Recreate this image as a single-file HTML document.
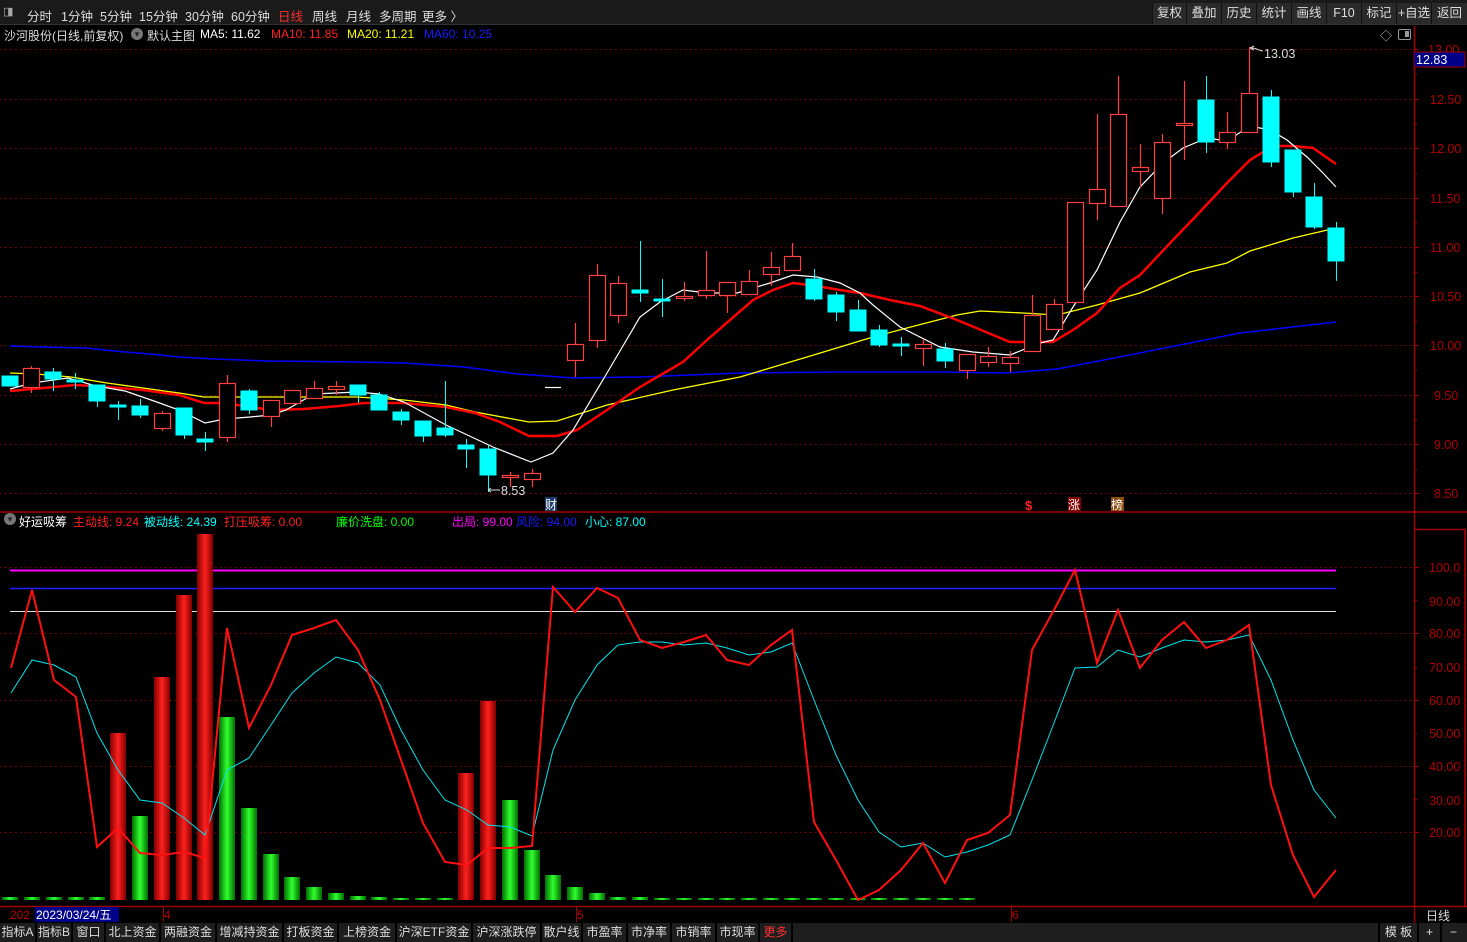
<!DOCTYPE html>
<html><head><meta charset="utf-8"><style>
*{margin:0;padding:0;box-sizing:border-box}
body{width:1467px;height:942px;background:#000;overflow:hidden;position:relative;font-family:"Liberation Sans","Noto Sans CJK SC",sans-serif;font-size:12px;color:#ddd}
.t{position:absolute;white-space:nowrap}
#top{position:absolute;left:0;top:0;width:1467px;height:25px;background:#1a1a1a;border-bottom:1px solid #333}
.tb{position:absolute;top:3px;height:21px;background:#2a2a2a;color:#ddd;font-size:12.5px;line-height:21px;text-align:center;border-left:1px solid #111}
#bot{position:absolute;left:0;top:923px;width:1467px;height:19px;background:#1e1e1e;display:flex}
#bot div{height:19px;line-height:19px;font-size:12px;color:#ddd;text-align:center;border-right:2px solid #000;white-space:nowrap}
</style></head><body>
<div id="top">
<div class="t" style="left:3px;top:5px;width:14px;height:13px;color:#aaa;font-size:11px">◨</div>
<div class="t" style="left:27px;top:6px;font-size:12.5px">分时</div>
<div class="t" style="left:61px;top:6px;font-size:12.5px">1分钟</div>
<div class="t" style="left:100px;top:6px;font-size:12.5px">5分钟</div>
<div class="t" style="left:139px;top:6px;font-size:12.5px">15分钟</div>
<div class="t" style="left:185px;top:6px;font-size:12.5px">30分钟</div>
<div class="t" style="left:231px;top:6px;font-size:12.5px">60分钟</div>
<div class="t" style="left:278px;top:6px;font-size:12.5px;color:#ff3030">日线</div>
<div class="t" style="left:312px;top:6px;font-size:12.5px">周线</div>
<div class="t" style="left:346px;top:6px;font-size:12.5px">月线</div>
<div class="t" style="left:379px;top:6px;font-size:12.5px">多周期</div>
<div class="t" style="left:422px;top:6px;font-size:12.5px">更多 〉</div>
<div class="tb" style="left:1152px;width:34px">复权</div>
<div class="tb" style="left:1186px;width:35px">叠加</div>
<div class="tb" style="left:1221px;width:35px">历史</div>
<div class="tb" style="left:1256px;width:35px">统计</div>
<div class="tb" style="left:1291px;width:35px">画线</div>
<div class="tb" style="left:1326px;width:35px">F10</div>
<div class="tb" style="left:1361px;width:35px">标记</div>
<div class="tb" style="left:1396px;width:35px">+自选</div>
<div class="tb" style="left:1431px;width:36px">返回</div>
</div>

<div class="t" style="left:4px;top:27px">沙河股份(日线,前复权)</div>
<div class="t" style="left:131px;top:28px;width:12px;height:12px;border-radius:6px;background:#777;color:#222;font-size:9px;line-height:12px;text-align:center">▾</div>
<div class="t" style="left:147px;top:27px">默认主图</div>
<div class="t" style="left:200px;top:27px;color:#fff">MA5: 11.62</div>
<div class="t" style="left:271px;top:27px;color:#ff2020">MA10: 11.85</div>
<div class="t" style="left:347px;top:27px;color:#ffff00">MA20: 11.21</div>
<div class="t" style="left:424px;top:27px;color:#1a1aff">MA60: 10.25</div>
<div class="t" style="left:1380px;top:27px;color:#bbb;font-size:12px">◇</div>
<div class="t" style="left:1398px;top:29px;width:13px;height:11px;border:1.5px solid #999;border-radius:2px"><div style="position:absolute;right:1px;top:1px;width:4px;height:6px;background:#999"></div></div>

<div class="t" style="left:4px;top:513px;width:12px;height:12px;border-radius:6px;background:#777;color:#222;font-size:9px;line-height:12px;text-align:center">▾</div>
<div class="t" style="left:19px;top:513px;color:#fff">好运吸筹</div>
<div class="t" style="left:73px;top:513px;color:#ff2020">主动线: 9.24</div>
<div class="t" style="left:144px;top:513px;color:#00ffff">被动线: 24.39</div>
<div class="t" style="left:224px;top:513px;color:#ff2020">打压吸筹: 0.00</div>
<div class="t" style="left:336px;top:513px;color:#00ff00">廉价洗盘: 0.00</div>
<div class="t" style="left:452px;top:513px;color:#ff00ff">出局: 99.00</div>
<div class="t" style="left:516px;top:513px;color:#1a1aff">风险: 94.00</div>
<div class="t" style="left:585px;top:513px;color:#00ffff">小心: 87.00</div>

<svg style="position:absolute;left:0;top:0" width="1467" height="942" xmlns="http://www.w3.org/2000/svg">
<g stroke="#8b0000" stroke-dasharray="1.5,3.5" stroke-width="1">
<path d="M0 49.5H1414M0 99.5H1414M0 148.5H1414M0 198.5H1414M0 247.5H1414M0 296.5H1414M0 345.5H1414M0 395.5H1414M0 444.5H1414M0 493.5H1414"/>
<path d="M0 567.5H1414M0 633.5H1414M0 700.5H1414M0 766.5H1414M0 832.5H1414"/>
</g>
<g stroke="#a00000" stroke-width="1.5" fill="none">
<path d="M0 512H1467M0 906.5H1467M1414.5 26V923"/>
<path d="M1415 529.5H1465V906"/>
<path d="M1465 529V906"/>
</g>
<g stroke="#a00000" stroke-width="1">
<path d="M1414 49.5h5M1414 74.5h3M1414 99.5h5M1414 124.5h3M1414 148.5h5M1414 173.5h3M1414 198.5h5M1414 222.5h3M1414 247.5h5M1414 272.5h3M1414 296.5h5M1414 321.5h3M1414 345.5h5M1414 370.5h3M1414 395.5h5M1414 420.5h3M1414 444.5h5M1414 469.5h3M1414 493.5h5"/>
<path d="M1414 567.5h5M1414 600.5h3M1414 633.5h5M1414 667.5h3M1414 700.5h5M1414 733.5h3M1414 766.5h5M1414 799.5h3M1414 832.5h5"/>
<path d="M163.5 907v15M576.5 907v15M1011.5 907v15"/>
</g>
<g fill="#b00000" font-size="12.5" font-family="Liberation Sans">
<text x="1428" y="54">13.00</text><text x="1430" y="104">12.50</text><text x="1430" y="153">12.00</text><text x="1430" y="203">11.50</text><text x="1430" y="252">11.00</text><text x="1430" y="301">10.50</text><text x="1430" y="350">10.00</text><text x="1434" y="400">9.50</text><text x="1434" y="449">9.00</text><text x="1434" y="498">8.50</text>
<text x="1429" y="572">100.0</text><text x="1429" y="606">90.00</text><text x="1429" y="638">80.00</text><text x="1429" y="672">70.00</text><text x="1429" y="705">60.00</text><text x="1429" y="738">50.00</text><text x="1429" y="771">40.00</text><text x="1429" y="805">30.00</text><text x="1429" y="837">20.00</text>
</g>
<rect x="1414" y="52" width="51" height="15" fill="#000088" stroke="#a00000" stroke-width="1"/>
<text x="1416" y="64" fill="#fff" font-size="12.5" font-family="Liberation Sans">12.83</text>

<!-- MA lines -->
<polyline fill="none" stroke="#0000ff" stroke-width="1.5" points="10,346 43,347 86,348 114,351 150,354 179,357 214,359 268,361 357,362 404,363 464,367 518,374 560,377 573,378 640,377 740,373 840,372 940,372 1007,373 1057,369 1140,353 1240,333 1336,322"/>
<polyline fill="none" stroke="#ffff00" stroke-width="1.3" points="10,373 36,374 71,377 107,383 143,388 179,393 204,397 268,397 357,397 404,400 446,405 475,412 529,422 557,421 607,405 673,390 740,377 807,357 873,337 907,328 957,315 980,311 1023,313 1057,315 1097,305 1140,293 1190,272 1227,263 1250,251 1293,238 1336,228"/>
<polyline fill="none" stroke="#ff0000" stroke-width="2.5" points="10,391 43,388 75,385 107,387 143,390 179,395 204,403 225,403 250,407 271,410 304,409 339,406 364,403 404,403 446,407 475,413 500,422 529,436 557,436 577,430 607,410 640,387 683,362 707,340 730,320 753,300 773,290 793,283 817,286 840,290 860,293 890,300 920,306 957,320 1010,342 1053,342 1073,330 1097,313 1120,288 1140,275 1173,240 1197,215 1227,183 1250,160 1273,146 1293,146 1313,148 1336,164"/>
<polyline fill="none" stroke="#ffffff" stroke-width="1.2" points="10,389 32,383 68,378 96,386 125,391 154,401 179,410 205,423 225,419 250,417 271,415 286,410 314,394 357,392 379,394 404,402 446,425 493,447 531,462 553,453 573,430 607,373 640,317 660,302 683,290 707,293 737,293 770,283 793,275 817,277 840,283 860,293 873,305 900,327 940,347 973,352 1010,355 1040,343 1053,340 1073,307 1097,270 1120,222 1140,187 1163,163 1183,148 1207,138 1227,141 1250,126 1270,130 1287,140 1307,157 1323,173 1336,187"/>

<!-- candles -->
<g stroke="#00ffff" fill="#00ffff" stroke-width="1">
<path d="M10.5 376V386M53.5 368V391M75.5 373V389M97.5 385V407M118.5 401V420M140.5 399V418M184.5 408V439M205.5 432V451M249.5 389V414M358.5 385V403M379.5 392V410M401.5 409V425M423.5 421V442M445.5 381V437M466.5 439V468M488.5 445V492M640.5 241V302M662.5 279V317M814.5 269V301M836.5 292V321M858.5 300V331M879.5 325V347M901.5 337V356M945.5 343V368M1206.5 76V153M1271.5 90V167M1293.5 150V197M1314.5 183V229M1336.5 222V281"/>
<rect x="2" y="376" width="16" height="10"/><rect x="45" y="372" width="16" height="7"/><rect x="67" y="380" width="16" height="2"/><rect x="89" y="385" width="16" height="16"/><rect x="110" y="405" width="16" height="2"/><rect x="132" y="406" width="16" height="9"/><rect x="176" y="408" width="16" height="27"/><rect x="197" y="439" width="16" height="3"/><rect x="241" y="391" width="16" height="19"/><rect x="350" y="385" width="16" height="10"/><rect x="371" y="395" width="16" height="15"/><rect x="393" y="412" width="16" height="8"/><rect x="415" y="421" width="16" height="15"/><rect x="437" y="428" width="16" height="7"/><rect x="458" y="445" width="16" height="4"/><rect x="480" y="449" width="16" height="26"/>
<rect x="632" y="290" width="16" height="3"/><rect x="654" y="299" width="16" height="2"/><rect x="806" y="279" width="16" height="20"/><rect x="828" y="295" width="16" height="17"/><rect x="850" y="310" width="16" height="21"/><rect x="871" y="330" width="16" height="15"/><rect x="893" y="344" width="16" height="2"/><rect x="937" y="349" width="16" height="12"/>
<rect x="1198" y="100" width="16" height="42"/><rect x="1263" y="97" width="16" height="65"/><rect x="1285" y="150" width="16" height="42"/><rect x="1306" y="197" width="16" height="30"/><rect x="1328" y="228" width="16" height="33"/>
</g>
<g stroke="#ff4040" fill="#000" stroke-width="1.2">
<path d="M31.5 366V393M162.5 411V431M227.5 375V442M271.5 400V427M292.5 390V403M314.5 381V398M336.5 381V395M510.5 472V487M532.5 469V487M575.5 323V377M597.5 264V348M618.5 276V323M684.5 282V301M706.5 251V299M727.5 282V313M749.5 270V294M771.5 252V286M792.5 243V270M923.5 339V366M967.5 354V379M988.5 347V367M1010.5 351V372M1032.5 295V351M1054.5 299V329M1075.5 202V302M1097.5 114V220M1118.5 76V206M1140.5 144V188M1162.5 134V214M1184.5 81V160M1227.5 112V149M1249.5 47V132"/>
<rect x="23.5" y="368.5" width="16" height="19"/><rect x="154.5" y="413.5" width="16" height="15"/><rect x="219.5" y="383.5" width="16" height="54"/><rect x="263.5" y="400.5" width="16" height="16"/><rect x="284.5" y="390.5" width="16" height="13"/><rect x="306.5" y="388.5" width="16" height="10"/><rect x="328.5" y="386.5" width="16" height="3"/><rect x="502.5" y="475.5" width="16" height="2"/><rect x="524.5" y="473.5" width="16" height="6"/>
<rect x="567.5" y="344.5" width="16" height="16"/><rect x="589.5" y="275.5" width="16" height="65"/><rect x="610.5" y="283.5" width="16" height="32"/><rect x="676.5" y="296.5" width="16" height="2"/><rect x="698.5" y="290.5" width="16" height="5"/><rect x="719.5" y="282.5" width="16" height="13"/><rect x="741.5" y="281.5" width="16" height="13"/><rect x="763.5" y="267.5" width="16" height="7"/><rect x="784.5" y="256.5" width="16" height="14"/>
<rect x="915.5" y="344.5" width="16" height="4"/><rect x="959.5" y="354.5" width="16" height="16"/><rect x="980.5" y="356.5" width="16" height="6"/><rect x="1002.5" y="357.5" width="16" height="6"/><rect x="1024.5" y="315.5" width="16" height="36"/><rect x="1046.5" y="304.5" width="16" height="25"/><rect x="1067.5" y="202.5" width="16" height="100"/><rect x="1089.5" y="189.5" width="16" height="14"/><rect x="1110.5" y="114.5" width="16" height="92"/><rect x="1132.5" y="167.5" width="16" height="4"/><rect x="1154.5" y="142.5" width="16" height="56"/><rect x="1176.5" y="123.5" width="16" height="2"/><rect x="1219.5" y="132.5" width="16" height="10"/><rect x="1241.5" y="93.5" width="16" height="39"/>
</g>
<path d="M545 387.5H561" stroke="#fff" stroke-width="1.2"/>
<path d="M1250 48l4-2M1250 48l4 2M1252 48c6 0 6 3 11 3" stroke="#ddd" fill="none" stroke-width="1"/>
<text x="1264" y="58" fill="#ddd" font-size="12.5" font-family="Liberation Sans">13.03</text>
<path d="M488 490H500M488 490l3-2M488 490l3 2" stroke="#ddd" fill="none" stroke-width="1"/>
<text x="501" y="495" fill="#ddd" font-size="12.5" font-family="Liberation Sans">8.53</text>
<rect x="545" y="497" width="12" height="14" fill="#1a3a6a"/>
<text x="545" y="509" fill="#fff" font-size="12" font-family="Noto Sans CJK SC">财</text>
<text x="1025" y="510" fill="#ff2020" font-size="13" font-weight="bold" font-family="Liberation Sans">$</text>
<rect x="1068" y="497" width="13" height="14" fill="#800000"/>
<text x="1068" y="509" fill="#fff" font-size="12" font-family="Noto Sans CJK SC">涨</text>
<rect x="1111" y="497" width="13" height="14" fill="#8b4a10"/>
<text x="1111" y="509" fill="#fff" font-size="12" font-family="Noto Sans CJK SC">榜</text>

<!-- lower panel -->
<path d="M10 570.5H1336" stroke="#ff00ff" stroke-width="2"/>
<path d="M10 588.5H1336" stroke="#2020ff" stroke-width="1.5"/>
<path d="M10 611.5H1336" stroke="#dddddd" stroke-width="1"/>
<defs>
<linearGradient id="rg" x1="0" x2="1"><stop offset="0" stop-color="#800000"/><stop offset=".5" stop-color="#ff2020"/><stop offset="1" stop-color="#800000"/></linearGradient>
<linearGradient id="gg" x1="0" x2="1"><stop offset="0" stop-color="#007000"/><stop offset=".5" stop-color="#30ff30"/><stop offset="1" stop-color="#007000"/></linearGradient>
</defs>
<g fill="url(#gg)">
<rect x="2" y="897" width="16" height="3"/><rect x="24" y="897" width="16" height="3"/><rect x="46" y="897" width="16" height="3"/><rect x="68" y="897" width="16" height="3"/><rect x="89" y="897" width="16" height="3"/>
<rect x="132" y="816" width="16" height="84"/><rect x="219" y="717" width="16" height="183"/><rect x="241" y="808" width="16" height="92"/><rect x="263" y="854" width="16" height="46"/><rect x="284" y="877" width="16" height="23"/><rect x="306" y="887" width="16" height="13"/><rect x="328" y="893" width="16" height="7"/><rect x="350" y="896" width="16" height="4"/><rect x="371" y="897" width="16" height="3"/><rect x="393" y="898" width="16" height="2"/><rect x="415" y="898" width="16" height="2"/><rect x="437" y="898" width="16" height="2"/>
<rect x="502" y="800" width="16" height="100"/><rect x="524" y="850" width="16" height="50"/><rect x="545" y="875" width="16" height="25"/><rect x="567" y="887" width="16" height="13"/><rect x="589" y="893" width="16" height="7"/><rect x="610" y="897" width="16" height="3"/><rect x="632" y="897" width="16" height="3"/><rect x="654" y="898" width="16" height="2"/><rect x="676" y="898" width="16" height="2"/><rect x="698" y="898" width="16" height="2"/><rect x="719" y="898" width="16" height="2"/><rect x="741" y="898" width="16" height="2"/><rect x="763" y="898" width="16" height="2"/><rect x="784" y="898" width="16" height="2"/><rect x="806" y="898" width="16" height="2"/><rect x="828" y="898" width="16" height="2"/><rect x="850" y="898" width="16" height="2"/><rect x="871" y="898" width="16" height="2"/><rect x="893" y="898" width="16" height="2"/><rect x="915" y="898" width="16" height="2"/><rect x="937" y="898" width="16" height="2"/><rect x="959" y="898" width="16" height="2"/>
</g>
<g fill="url(#rg)">
<rect x="110" y="733" width="16" height="167"/><rect x="154" y="677" width="16" height="223"/><rect x="176" y="595" width="16" height="305"/><rect x="197" y="534" width="16" height="366"/><rect x="458" y="773" width="16" height="127"/><rect x="480" y="701" width="16" height="199"/>
</g>
<polyline fill="none" stroke="#00e5ee" stroke-width="1" points="11,693 32,660 54,665 76,677 97,733 118,770 140,800 162,803 184,818 205,835 227,770 249,758 271,725 292,693 314,673 336,657 358,663 380,685 401,730 423,770 445,800 467,810 488,825 510,827 532,836 553,750 575,700 597,665 618,645 640,642 662,642 684,645 706,643 727,648 749,655 771,652 792,643 814,700 836,755 858,800 879,832 901,847 923,843 945,857 967,852 988,845 1010,835 1032,780 1054,723 1075,668 1097,667 1118,650 1140,657 1162,648 1184,640 1206,642 1227,640 1249,635 1271,680 1293,740 1314,790 1336,818"/>
<polyline fill="none" stroke="#ff1010" stroke-width="2" points="11,668 32,590 54,680 76,697 97,847 118,828 140,853 162,855 184,852 205,858 227,628 249,728 271,685 292,635 314,628 336,620 358,650 380,700 401,760 423,823 445,862 467,865 488,848 510,848 532,846 553,587 575,612 597,588 618,598 640,640 662,648 684,642 706,635 727,660 749,665 771,645 792,630 814,822 836,860 858,900 879,890 901,870 923,843 945,883 967,840 988,833 1010,815 1032,650 1054,610 1075,570 1097,663 1118,610 1140,668 1162,640 1184,622 1206,648 1227,640 1249,625 1271,785 1293,855 1314,897 1336,870"/>

<!-- date axis -->
<text x="10" y="919" fill="#c00000" font-size="12" font-family="Liberation Sans">202</text>
<rect x="35" y="907" width="84" height="15" fill="#000088"/>
<text x="36" y="919" fill="#fff" font-size="12" font-family="Liberation Sans,Noto Sans CJK SC">2023/03/24/五</text>
<text x="164" y="919" fill="#c00000" font-size="12" font-family="Liberation Sans">4</text>
<text x="577" y="919" fill="#c00000" font-size="12" font-family="Liberation Sans">5</text>
<text x="1012" y="919" fill="#c00000" font-size="12" font-family="Liberation Sans">6</text>
<text x="1426" y="920" fill="#ddd" font-size="12" font-family="Noto Sans CJK SC">日线</text>
</svg>

<div id="bot">
<div style="width:37px">指标A</div><div style="width:36px">指标B</div><div style="width:33px">窗口</div><div style="width:55px">北上资金</div><div style="width:56px">两融资金</div><div style="width:67px">增减持资金</div><div style="width:55px">打板资金</div><div style="width:58px">上榜资金</div><div style="width:76px">沪深ETF资金</div><div style="width:69px">沪深涨跌停</div><div style="width:41px">散户线</div><div style="width:45px">市盈率</div><div style="width:44px">市净率</div><div style="width:45px">市销率</div><div style="width:43px">市现率</div><div style="width:33px;color:#ff3030">更多</div>
<div style="width:587px;border-right:2px solid #000"></div>
<div style="width:39px">模 板</div><div style="width:23px">+</div><div style="width:23px;border:none">−</div>
</div>
</body></html>
